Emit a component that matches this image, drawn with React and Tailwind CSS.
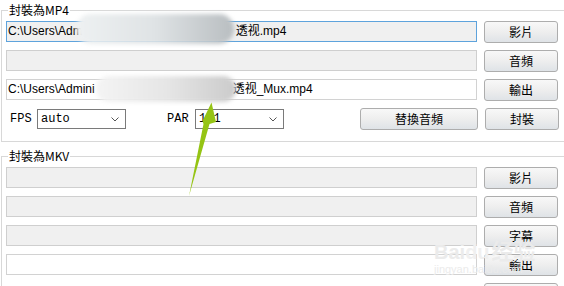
import React from 'react';

const cjk = { fontFamily: '"Noto Sans CJK TC", "Noto Sans CJK SC", sans-serif' };
const mono = { fontFamily: '"Liberation Mono", monospace' };
const sans = { fontFamily: '"Liberation Sans", "Noto Sans CJK SC", sans-serif' };

function Button({ children, className = 'w-[74px]' }) {
  return (
    <button
      style={cjk}
      className={`${className} h-[22px] shrink-0 rounded-[3px] border border-[#adadad] bg-gradient-to-b from-[#f8f8f8] via-[#eeeeee] to-[#dfe3e7] text-[12px] leading-[20px] text-black`}
    >
      {children}
    </button>
  );
}

function TextBox({ kind = 'disabled', children }) {
  const look = {
    focus: 'border-[#5ea3dc] bg-[#f0f0f0]',
    disabled: 'border-[#cfcfcf] bg-[#f0f0f0]',
    white: 'border-[#d2d2d2] bg-white',
  }[kind];
  return (
    <div
      style={sans}
      className={`w-[471px] h-[21px] shrink-0 border ${look} px-[1px] text-[12px] leading-[19px] text-black whitespace-nowrap overflow-hidden`}
    >
      {children}
    </div>
  );
}

function Row({ box, label }) {
  return (
    <div className="flex items-start gap-[7px] h-[22px]">
      {box}
      <Button>{label}</Button>
    </div>
  );
}

function Combo({ value }) {
  return (
    <div className="w-[89px] h-[20px] border border-[#7a7a7a] bg-white flex items-center justify-between pl-[3px] pr-[6px]">
      <span style={mono} className="text-[12px] leading-[18px] text-black">{value}</span>
      <svg width="8" height="5" viewBox="0 0 8 5">
        <polyline points="0.5,0.5 4,4 7.5,0.5" fill="none" stroke="#555" strokeWidth="1" />
      </svg>
    </div>
  );
}

function Group({ title, children, className = '' }) {
  return (
    <div className={`relative ml-[1px] w-[620px] border-t border-l border-[#d8d8d8] pl-[4px] pt-[10px] ${className}`}>
      <span style={cjk} className="absolute left-[6px] -top-[9px] bg-white px-[1px] text-[12px] leading-[16px] text-black">
        {title}
      </span>
      <div className="flex flex-col gap-[7px]">{children}</div>
    </div>
  );
}

export default function App() {
  return (
    <div className="relative w-[564px] h-[286px] overflow-hidden bg-white pt-[10px]">
      <Group title="封裝為MP4" className="h-[132px] border-b">
        <Row
          label="影片"
          box={
            <TextBox kind="focus">
              C:\Users\Adm<span className="inline-block w-[153px]" />透视.mp4
            </TextBox>
          }
        />
        <Row label="音頻" box={<TextBox />} />
        <Row
          label="輸出"
          box={
            <TextBox kind="white">
              C:\Users\Admini<span className="inline-block w-[138px]" />透视_Mux.mp4
            </TextBox>
          }
        />
        <div className="flex items-center h-[22px]">
          <span style={mono} className="ml-[4px] w-[27px] text-[12px] text-black">FPS</span>
          <Combo value="auto" />
          <span style={mono} className="ml-[41px] w-[28px] text-[12px] text-black">PAR</span>
          <Combo value="1:1" />
          <Button className="ml-[76px] w-[118px]">替換音頻</Button>
          <Button className="ml-[7px] w-[74px]">封裝</Button>
        </div>
      </Group>

      <Group title="封裝為MKV" className="mt-[14px] h-[200px]">
        <Row label="影片" box={<TextBox />} />
        <Row label="音頻" box={<TextBox />} />
        <Row label="字幕" box={<TextBox />} />
        <Row label="輸出" box={<TextBox kind="white" />} />
        <Row label="" box={<div className="w-[471px] h-[21px]" />} />
      </Group>

      {/* blurred privacy patches */}
      <div className="absolute left-[76px] top-[14px] w-[158px] h-[30px] rounded-full bg-gradient-to-r from-[#eef1f2] via-[#dfe3e5] to-[#b9bec1] blur-[2px]" />
      <div className="absolute left-[96px] top-[76px] w-[140px] h-[26px] rounded-full bg-gradient-to-r from-[#f4f4f4] via-[#e6e6e6] to-[#cbcbcb] blur-[2px]" />

      {/* watermark */}
      <div className="absolute left-[434px] top-[238px] pointer-events-none select-none text-[#ebebeb]">
        <div style={sans} className="text-[20px] font-bold leading-[22px] whitespace-nowrap">
          Bai<span className="text-[#f0f0f0]">du</span>
          <span style={cjk} className="ml-[2px] text-[22px]">经验</span>
        </div>
        <div style={sans} className="text-[11px] leading-[12px] whitespace-nowrap">jingyan.baidu.com</div>
      </div>

      {/* green arrow */}
      <svg className="absolute left-0 top-0 pointer-events-none" width="564" height="286" viewBox="0 0 564 286">
        <polygon points="189,196 203.5,124 202.5,121 211.5,102.5 216,122 209.5,124" fill="#95c414" />
      </svg>
    </div>
  );
}
